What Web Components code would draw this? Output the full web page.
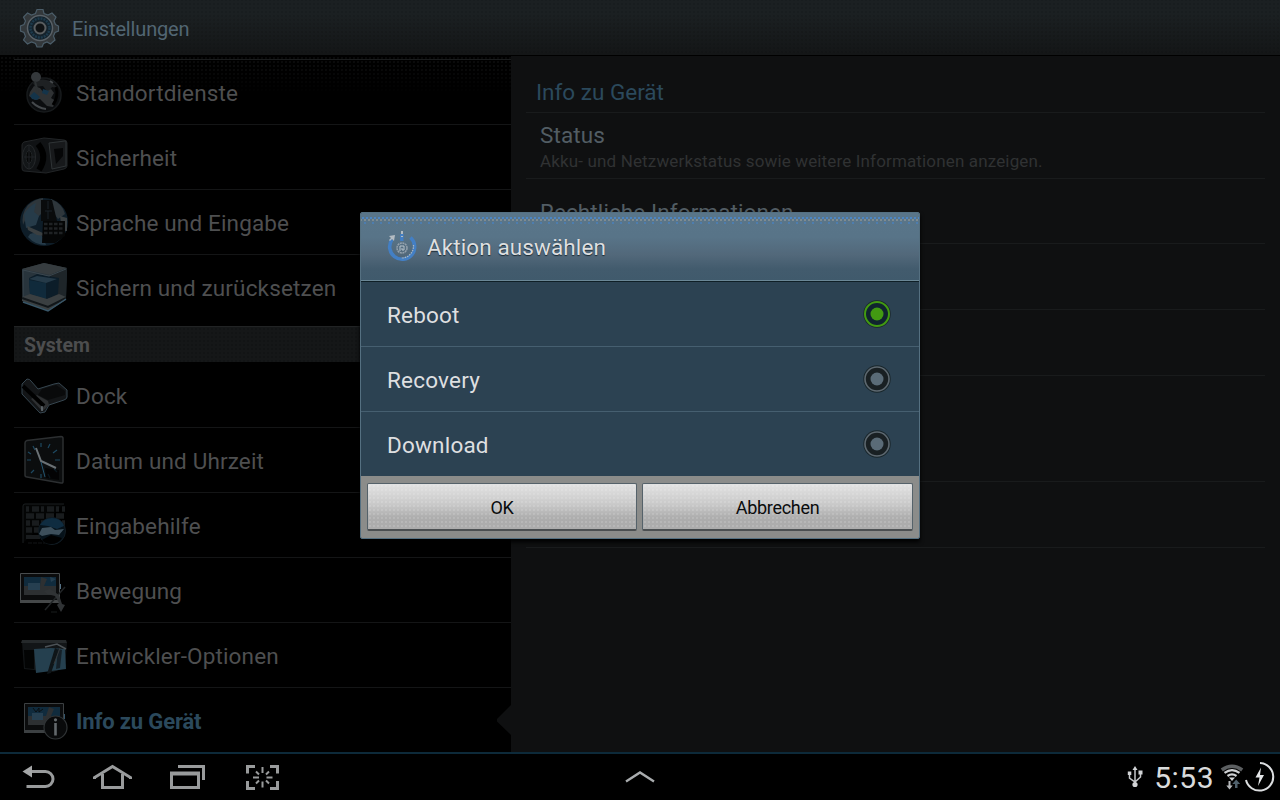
<!DOCTYPE html>
<html lang="de">
<head>
<meta charset="utf-8">
<title>Einstellungen</title>
<style>
  body {
    margin: 0;
    background: #000;
    font-family: Roboto, "Liberation Sans", sans-serif;
  }
</style>
</head>
<body>
<settings-screen></settings-screen>

<script>
const ICONS = {
  gear: [40, 40, `
    <g stroke="#4b5d69" fill="#33383b">
      <path stroke-width="1.2" d="M17 1.500h6l1 4 4 1.500 4-2 4 4-2 4 1.500 3.500 3 1.500v5l-3.500 1.500-1.500 3.500 1.500 4-4.500 4-3.500-2-3.500 1.500-1.500 3.500h-5l-1.500-3.500-4-1.500-4 2-4-4 2-3.500-1.500-4-3.500-1.500v-5l3.500-1.500 1.500-3.500-2-4 4-4 4 2 4-1.500z"/>
    </g>
    <circle cx="20" cy="20" r="12.500" fill="#14222b" stroke="#596167" stroke-width="1.500"/>
    <circle cx="20" cy="20" r="9.500" fill="none" stroke="#1d3a4c" stroke-width="2.500" stroke-dasharray="2 1"/>
    <circle cx="20" cy="20" r="5.500" fill="#101315" stroke="#5a5e60" stroke-width="2"/>`],
  location: [48, 48, `
    <circle cx="24" cy="27" r="17" fill="#0b0d0f" stroke="#171a1c" stroke-width="1.500"/>
    <path fill="#1e2123" d="M13 15q8-6 17-2l8 7-6-1-4 6-5-7-8 1z"/>
    <path fill="#2f3234" d="M10 24l4-6 6 2 4 5 7-4 3 4-3 5 5 3-3 6-6-1-7-7-5 1-6-4z"/>
    <path fill="#14344a" d="M10 28l4-4 6 5-3 3-5-1zM23 21l6 2-2 4-5-2z"/>
    <path d="M12 34q6 6 14 7M30 13l3 2" stroke="#45494c" stroke-width="2" fill="none"/>
    <path d="M36 19q3 9-3 18" stroke="#000" stroke-width="3" fill="none"/>
    <circle cx="16" cy="9" r="5" fill="#34383b"/>
    <path d="M15 13l3 12" stroke="#2e3234" stroke-width="2"/>`],
  safe: [48, 48, `
    <path fill="#101214" stroke="#222527" d="M2 12q0-2 2-3l20-4 20 2q3 0 3 3v23q0 2-3 3l-18 4-22-2q-2 0-2-3z"/>
    <path fill="#17191b" stroke="#2f3436" d="M29 10l16-2q1 0 1 2v23l-14 3z"/>
    <path fill="#050607" d="M34 16l9-1v8l-7 8z"/>
    <ellipse cx="9" cy="24" rx="6.500" ry="12" fill="#131618" stroke="#26292b"/>
    <ellipse cx="9" cy="24" rx="3" ry="6.500" fill="#070808" stroke="#202426"/>
    <path d="M9 13v22M4 24h11" stroke="#202326"/>
    <path d="M18 11q10 12 1 26" stroke="#000" stroke-width="6" fill="none"/>`],
  language: [48, 48, `
    <circle cx="24" cy="24" r="24" fill="#0e1d28"/>
    <path fill="#2e363b" d="M8 7q7-6 15-7l-1 15-8 8-8-3-3 7q-2-11 5-20zM31 1q12 5 14 15l-7 5-6-8z"/>
    <path fill="#263b49" d="M4 16q5-8 12-11l-2 9 5 4-3 9-10 3zM10 36q8-3 13 3l3 8q-11 0-18-8z"/>
    <path fill="#3a3f41" d="M7 28l16 7 1 3-7-1-9-5zM40 18l7 2v13h-5z"/>
    <path fill="#090b0c" d="M21 2h11l5 21h-16z"/>
    <path d="M28 3v8M25 13h7M28 13v8" stroke="#1a2228"/>
    <path fill="#050606" d="M23 23h22v15l-10 7h-13z"/>
    <path d="M24 26h19M24 30.500h19M24 35h19" stroke="#1f2224" stroke-width="2.500" stroke-dasharray="3.500 1.500"/>`],
  backup: [48, 50, `
    <path fill="#28343c" d="M2 7l22-6 23 5-1 30-17 11-26-9z"/>
    <path fill="#363c3f" d="M2 7l22-6 23 5-17 7z"/>
    <path fill="#1e2529" d="M30 13l17-7-1 30-16 10z"/>
    <path fill="#0c1d29" d="M9 16l8-4 22 4-1 16-11 5-17-5z"/>
    <path fill="#102a3b" d="M9 18l17 3v16l-16-5z"/>
    <path fill="#253a48" d="M9 17l8-3 20 3-11 4z"/>
    <path fill="#3a3f41" d="M2 35l8-3 17 5 12-5 7 3v3l-18 11-26-10z"/>
    <path d="M2 36l26 9 18-9" fill="none" stroke="#111619" stroke-width="2"/>
    <path d="M3 40l25 9 18-12" fill="none" stroke="#385668" stroke-width="1.500"/>
    <path d="M3 8l26 6 17-7M3 8v27" stroke="#3a464e" fill="none"/>`],
  dock: [48, 36, `
    <path fill="#131517" stroke="#364650" d="M2 7l5-5q3 0 4 2l7 8 16-5 5-1 8 7v7q0 2-3 3l-15 5-4 7-5 1-18-19z"/>
    <path fill="#090a0b" d="M22 12l14-4 9 6v4l-17 5-10-5z"/>
    <path fill="#2e3032" d="M17 18l11 6 1 4-4 4-3 2-11-12z"/>
    <path d="M3 9l21 20" stroke="#000" stroke-width="4"/>
    <path d="M22 29v5" stroke="#85929b"/>`],
  clock: [42, 50, `
    <path fill="#0b0d0e" stroke="#2c2f31" stroke-width="1.500" d="M2 8q0-2 2-2.500l34-4q2 0 2 2v43q0 2-2 1.500l-34-6q-2 0-2-2z"/>
    <path d="M18 8v4M27 9l-2 4M34 15l-4 3M32 25h5M31 34l3 3M25 39l2 4M18 39v4M11 35l-3 3M4 25h4M5 17l3 2M10 11l2 4" stroke="#1d4860" stroke-width="1.200"/>
    <path d="M13 13l5 13 15 7" stroke="#6a7175" stroke-width="2" fill="none"/>
    <path d="M18 27l4 15" stroke="#245672"/>
    <path fill="#000" d="M22 33l14 2v10l-13-2z" opacity=".7"/>`],
  keyboard: [44, 44, `
    <path d="M1 40V3q0-2 2-2h39" fill="#040505" stroke="#1b1f21"/>
    <g stroke="#191c1e" stroke-width="5.500">
      <path d="M4 6h39" stroke-dasharray="3 3 7 2"/>
      <path d="M4 13h39" stroke-dasharray="8 2"/>
      <path d="M4 20h39" stroke-dasharray="4 2 7 2"/>
      <path d="M4 27h14" stroke-dasharray="6 2"/>
      <path d="M4 34h14" stroke-width="4"/>
    </g>
    <path d="M6 40h24" stroke="#131517" stroke-dasharray="4 1"/>
    <circle cx="30" cy="28" r="13.500" fill="#06121a" stroke="#121c23"/>
    <path fill="#0f2c40" d="M18 22q4-7 12-7 9 0 12 8l-7 3-9-3z"/>
    <path fill="#3d4f5b" d="M17 31l3-6 9-1 4 3 9-1-5 6-8-1-9 2z"/>
    <path fill="#000" d="M20 37l9-5 11 3q-4 6-11 6-6 0-9-4z"/>`],
  motion: [48, 40, `
    <g transform="translate(0 3)">
      <path fill="#0b0c0d" stroke="#484c4e" d="M.500 .500h39v29h-39z"/>
      <path fill="#454849" d="M0 27h40v3h-40z"/>
      <path fill="#102b3d" d="M4 4h32v9h-32z"/>
      <path fill="#2d3032" d="M4 13h32v9h-32zM21 4l6 2-3 7h-4z"/>
      <path fill="#263f50" d="M8 10h12v7h-12zM30 4l6 2-5 3z"/>
      <path d="M40.500 11v5" stroke="#557184"/>
      <path d="M25 37l20-23" stroke="#212426" stroke-width="1.500"/>
      <path fill="#303335" d="M24 18l6-2 9 6 3 9 3 1-4 7-4-7 2-2-4-7-8-2z"/>
      <path d="M31 39h6" stroke="#191c1d"/>
    </g>`],
  developer: [48, 36, `
    <g transform="translate(0 2)">
      <path fill="#121517" d="M2 3h43l2 1-2 25-12 4-29-3z"/>
      <path fill="#25292b" d="M2 1h44l1 3h-46z"/>
      <path fill="#030404" d="M4 11h10v19l-9-1z"/>
      <path fill="#25404f" d="M14 10l17-1 14 1 1 20-30 4z"/>
      <path fill="#0f1518" d="M35 9l4 2-8 23-4 1z"/>
      <path fill="#152028" d="M38 10l4 1-2 18-4 1z"/>
      <path d="M25 8l12-3 9 5" stroke="#4c5256" stroke-width="1.600" fill="none"/>
      <path d="M40 9l-6 16" stroke="#36393b"/>
    </g>`],
  about: [48, 40, `
    <g transform="translate(0 2)">
      <path fill="#0b0c0d" stroke="#3c4042" d="M4.500 1.500h39v29h-39z"/>
      <path fill="#3c4042" d="M4 28h24v3h-24z"/>
      <path fill="#102b3d" d="M8 5h32v9h-32z"/>
      <path fill="#2d3032" d="M8 14h32v9h-32zM29 5l5 2-3 7h-5z"/>
      <path fill="#263f50" d="M12 11h11v7h-11z"/>
      <path d="M13 6l3 4 3-4v4l4-3" stroke="#0b0f11" fill="none"/>
      <path d="M44.500 12v5" stroke="#33546a"/>
      <circle cx="35.500" cy="25.500" r="11.500" fill="#090a0b" stroke="#303436" stroke-width="1.200"/>
      <path d="M35.500 21v12.500" stroke="#64696c" stroke-width="2.600"/>
      <circle cx="35.500" cy="17.800" r="1.600" fill="#64696c"/>
    </g>`],
  power: [30, 32, `
    <g fill="none" stroke="#437fc4">
      <path stroke-width="3.600" d="M5 9.500A12.500 12.500 0 1 0 23.500 7.500"/>
      <path stroke-width="3.400" d="M14.800 4v7"/>
      <path stroke="#aeb8c0" stroke-width="1.200" stroke-dasharray="1.500 1" d="M26.500 15A12 12 0 0 1 14 28"/>
      <circle cx="15" cy="18" r="5" stroke="#93a1ad" stroke-width="1.500" stroke-dasharray="2 .6"/>
      <path d="M13 21v-5h4v4h-2v-2" stroke="#b7c4ce"/>
    </g>
    <path fill="#b4bcc2" d="M2 6l6-1-1 6-2-2-2 2-1-1 2-2zM14 1h2v3h-2zM14 6h2v1h-2z"/>`],
  back: [34, 26, `
    <path fill="none" stroke="#999b9c" stroke-width="3" d="M8 7.500h15.500a7.500 7.500 0 0 1 0 15h-19"/>
    <path fill="#a5a7a8" d="M.500 7.500l9.500-6v12z"/>`],
  home: [40, 26, `
    <g fill="none" stroke="#999b9c" stroke-width="3">
      <path d="M1.500 15v-1.500l18-11 18 11v1.500"/>
      <path d="M9.500 10v13.500h20v-13.500"/>
    </g>`],
  recent: [36, 26, `
    <g fill="none" stroke="#999b9c" stroke-width="3">
      <path d="M1.500 9.500h27v14h-27z" />
      <path d="M8 2.500h25.500v13.500"/>
      <path d="M0 9.500h30" stroke-width="4"/>
    </g>`],
  capture: [34, 26, `
    <g fill="none" stroke="#999b9c">
      <path stroke-width="3" d="M10 2.500h-7.500v7M25 2.500h7.500v7M2.500 17v7.500h7.500M32.500 17v7.500h-7.500"/>
      <path stroke-width="2" d="M17.500 3v6M17.500 17.500v6M8 13.500h6M21.500 13.500h6M11 7.500l3 3M24 7.500l-3 3M11 19.500l3-3M24 19.500l-3-3"/>
    </g>`],
  up: [30, 14, `<path fill="none" stroke="#a9acae" stroke-width="2.400" d="M1 11.500l14-9 14 9"/>`],
  usb: [16, 22, `
    <g fill="none" stroke="#c6c8ca" stroke-width="1.500">
      <path d="M8 3v15M2.500 8v4l5.500 4 5.500-5v-4"/>
    </g>
    <path fill="#d2d4d6" d="M8 0l2.500 4h-5zM.800 5.500h3.500v3.500h-3.500zM11.500 4.500h4v4h-4z"/>
    <circle cx="8" cy="18.500" r="2.600" fill="#d2d4d6"/>`],
  wifi: [24, 26, `
    <g fill="none">
      <path stroke="#5c5f61" stroke-width="3.600" d="M.800 6q10.200-7.500 20.400 0"/>
      <path stroke="#d0d2d4" stroke-width="2.200" d="M3.500 8.800q7.500-5.500 15 0M6.500 12q4.500-3.200 9 0"/>
    </g>
    <path fill="#d2d4d6" d="M8 13.500h6l-3 3.500z"/>
    <path fill="#b5b8ba" d="M7.500 17h2v4.500h2.200l-3.200 4-3.200-4h2.200z"/>
    <path fill="#50616c" d="M14 24h2.500v-4h2.700l-4-4.500-3.900 4.500h2.700z"/>`],
  battery: [30, 32, `
    <path fill="none" stroke="#dcdee0" stroke-width="2" d="M15 2A13.800 13.800 0 1 1 1 19"/>
    <path fill="#e4e6e8" d="M16 6.500l-5.500 10h4l-1.500 8.500 6-11h-4z"/>`]
};

class UiIcon extends HTMLElement {
  connectedCallback() {
    const [w, h, shapes] = ICONS[this.getAttribute('name')];
    this.attachShadow({ mode: 'open' }).innerHTML = `
    <style>
      :host { display: block; flex: none; }
      svg { display: block; overflow: visible; }
    </style>
    <svg width="${w}" height="${h}" viewBox="0 0 ${w} ${h}">${shapes}</svg>`;
  }
}

class SettingsHeader extends HTMLElement {
  connectedCallback() {
    this.attachShadow({ mode: 'open' }).innerHTML = `
    <style>
      :host {
        display: flex;
        align-items: center;
        gap: 12px;
        box-sizing: border-box;
        height: 56px;
        padding: 0 20px;
        font-size: 20px;
        letter-spacing: -.15px;
        color: #526673;
        border-bottom: 1px solid #000;
        background:
          radial-gradient(circle, rgba(0,0,0,.2) .6px, transparent .8px) 0 14px / 4px 4px,
          linear-gradient(#1b2022 0, #1b2022 14px, #141617 54px);
      }
      span { padding-top: 2px; }
    </style>
    <ui-icon name="gear"></ui-icon><span><slot></slot></span>`;
  }
}

class NavItem extends HTMLElement {
  connectedCallback() {
    this.attachShadow({ mode: 'open' }).innerHTML = `
    <style>
      :host {
        display: flex;
        align-items: center;
        box-sizing: border-box;
        height: 65px;
        margin-left: 14px;
        border-bottom: 1px solid #141516;
        font-size: 22.5px;
        letter-spacing: .15px;
        color: #4e4f50;
      }
      :host([last]) { border-bottom-color: transparent; }
      :host([active]) {
        font-size: 22px;
        font-weight: 700;
        letter-spacing: -.15px;
        color: #2b495c;
      }
      .icon {
        display: flex;
        justify-content: center;
        width: 48px;
        margin: 0 8px 0 6px;
      }
      .label { padding-top: 2px; }
    </style>
    <div class="icon"><ui-icon name="${this.getAttribute('icon')}"></ui-icon></div>
    <span class="label"><slot></slot></span>`;
  }
}

class NavHeading extends HTMLElement {
  connectedCallback() {
    this.attachShadow({ mode: 'open' }).innerHTML = `
    <style>
      :host {
        display: flex;
        align-items: center;
        box-sizing: border-box;
        height: 36px;
        margin: 6px 0 1px 14px;
        padding: 1px 0 0 10px;
        border-top: 1px solid #212324;
        font-size: 19.5px;
        font-weight: 700;
        color: #4c4d4e;
        background:
          radial-gradient(circle, rgba(0,0,0,.3) .6px, transparent .8px) 0 0 / 4px 4px,
          #151718;
      }
    </style>
    <slot></slot>`;
  }
}

class PrefItem extends HTMLElement {
  connectedCallback() {
    this.attachShadow({ mode: 'open' }).innerHTML = `
    <style>
      :host {
        display: flex;
        flex-direction: column;
        box-sizing: border-box;
        height: var(--row, 66px);
        padding: 9px 14px 0;
        border-bottom: 1px solid #191b1c;
        font-size: 22.5px;
        line-height: 26px;
        letter-spacing: .1px;
        color: #525d64;
      }
      ::slotted(small) {
        display: block;
        margin-top: 1px;
        font-size: 17px;
        line-height: 24px;
        letter-spacing: .15px;
        color: #303233;
      }
    </style>
    <slot></slot><slot name="summary"></slot>`;
  }
}

class PrefPane extends HTMLElement {
  connectedCallback() {
    this.attachShadow({ mode: 'open' }).innerHTML = `
    <style>
      :host {
        display: block;
        position: relative;
        flex: 1;
        padding: 0 15px;
        background: #0f1011;
      }
      /* notch that points at the selected entry */
      :host::before {
        content: "";
        position: absolute;
        left: -14px;
        top: 649px;
        width: 14px;
        height: 30px;
        background: #0f1011;
        clip-path: polygon(100% 0, 0 47%, 0 55%, 100% 100%);
      }
      h2 {
        box-sizing: border-box;
        height: 57px;
        margin: 0;
        padding: 23px 10px 0;
        border-bottom: 1px solid #191b1c;
        font-size: 22.5px;
        font-weight: 400;
        line-height: 26px;
        letter-spacing: 0;
        color: #2b495c;
      }
    </style>
    <h2>${this.getAttribute('heading')}</h2>
    <slot></slot>`;
  }
}

class NavBar extends HTMLElement {
  connectedCallback() {
    this.attachShadow({ mode: 'open' }).innerHTML = `
    <style>
      :host {
        display: grid;
        grid-template-columns: 1fr auto 1fr;
        align-items: center;
        box-sizing: border-box;
        height: 48px;
        border-top: 2px solid #0d2a3a;
        background: #000;
      }
      .keys, .status { display: flex; align-items: center; }
      .keys { gap: 37px; padding-left: 22px; }
      .keys ui-icon:last-child { margin-left: 2px; }
      .status { justify-content: flex-end; padding-right: 5px; }
      .time {
        margin: 0 7px 0 11px;
        padding-top: 2px;
        font-size: 30px;
        line-height: 34px;
        letter-spacing: .5px;
        color: #d9dbdc;
      }
    </style>
    <div class="keys">
      <ui-icon name="back"></ui-icon>
      <ui-icon name="home"></ui-icon>
      <ui-icon name="recent"></ui-icon>
      <ui-icon name="capture"></ui-icon>
    </div>
    <ui-icon name="up"></ui-icon>
    <div class="status">
      <ui-icon name="usb"></ui-icon>
      <span class="time">5:53</span>
      <ui-icon name="wifi"></ui-icon>
      <ui-icon name="battery"></ui-icon>
    </div>`;
  }
}

class RadioRow extends HTMLElement {
  connectedCallback() {
    const on = this.hasAttribute('checked');
    const ring = on ? '#429a12' : '#5d6870';
    const dot = on ? '#429a12' : '#5a6b77';
    const base = on ? '#10242f' : '#192023';
    this.attachShadow({ mode: 'open' }).innerHTML = `
    <style>
      :host {
        display: flex;
        align-items: center;
        justify-content: space-between;
        box-sizing: border-box;
        height: 65px;
        padding: 0 28px 0 26px;
        border-bottom: 1px solid #465f70;
        font-size: 22.5px;
        letter-spacing: .2px;
        color: #dedfe0;
        cursor: pointer;
      }
      :host(:last-of-type) { border-bottom: 0; height: 64px; }
      span { padding-top: 2px; }
    </style>
    <span><slot></slot></span>
    <svg width="28" height="28" viewBox="0 0 28 28">
      <circle cx="14" cy="14" r="13.700" fill="#19262b"/>
      <circle cx="14" cy="14" r="12" fill="${base}" stroke="${ring}" stroke-width="${on ? 2 : 1.6}"/>
      <circle cx="14" cy="14" r="6.500" fill="${dot}"/>
    </svg>`;
  }
}

class DialogButton extends HTMLElement {
  connectedCallback() {
    this.attachShadow({ mode: 'open' }).innerHTML = `
    <style>
      :host { display: flex; }
      button {
        flex: 1;
        height: 48px;
        padding: 2px 0 0;
        border: 1px solid #55626a;
        border-bottom: 2px solid #4b4f51;
        border-radius: 2px;
        font: 18px Roboto, "Liberation Sans", sans-serif;
        letter-spacing: -.3px;
        color: #0a0c0d;
        background:
          radial-gradient(circle, rgba(255,255,255,.2) .6px, transparent .9px) 0 0 / 4px 4px,
          linear-gradient(#e2e2e2, #c9c9c9 45%, #adadad 75%, #acacac);
      }
    </style>
    <button><slot></slot></button>`;
  }
}

class ActionDialog extends HTMLElement {
  connectedCallback() {
    this.attachShadow({ mode: 'open' }).innerHTML = `
    <style>
      :host {
        position: absolute;
        left: 360px;
        top: 212px;
        display: block;
        box-sizing: border-box;
        width: 560px;
        height: 327px;
        border: 1px solid #557081;
        border-radius: 2px;
        overflow: hidden;
        background: #2c4252;
        box-shadow: 0 3px 4px #000;
      }
      header {
        display: flex;
        align-items: center;
        gap: 10px;
        box-sizing: border-box;
        height: 69px;
        padding: 0 26px 2px;
        border-bottom: 1px solid #0f1f26;
        box-shadow: inset 0 -1px #6b8796;
        font-size: 22.5px;
        letter-spacing: .1px;
        color: #dedfe0;
        text-shadow: 0 1px 1px #1b2a33;
        background:
          radial-gradient(circle, #4d86c4 .7px, transparent 1px) 0 3px / 4px 4px repeat-x,
          radial-gradient(circle, #7f8c93 .7px, transparent 1px) 2px 5px / 4px 4px repeat-x,
          radial-gradient(circle, #4d7db0 .7px, transparent 1px) 0 8px / 8px 4px repeat-x,
          linear-gradient(#597589 0, #587488 24px, #52687a 42px, #425b6d 56px, #405a6c);
      }
      header span { padding-top: 2px; }
      footer {
        display: grid;
        grid-template-columns: 270px 1fr;
        gap: 5px;
        align-items: start;
        height: 55px;
        padding: 7px 6px 0;
        background: #8b8c8a;
      }
    </style>
    <header><ui-icon name="power"></ui-icon><span>${this.getAttribute('heading')}</span></header>
    <slot></slot>
    <footer><slot name="button"></slot></footer>`;
  }
}

class SettingsScreen extends HTMLElement {
  connectedCallback() {
    this.attachShadow({ mode: 'open' }).innerHTML = `
    <style>
      :host {
        display: flex;
        flex-direction: column;
        position: relative;
        width: 1280px;
        height: 800px;
        overflow: hidden;
        background: #000;
      }
      main { display: flex; flex: 1; min-height: 0; }
      nav {
        box-sizing: border-box;
        width: 511px;
        padding-top: 3px;
        background:
          linear-gradient(transparent 10px, #000 38px),
          radial-gradient(circle, #151617 .6px, #000 .8px) 0 0 / 4px 4px;
      }
      nav::before {
        content: "";
        display: block;
        height: 1px;
        margin-left: 14px;
        background: #1a1c1d;
      }
    </style>
    <settings-header>Einstellungen</settings-header>
    <main>
      <nav>
        <nav-item icon="location">Standortdienste</nav-item>
        <nav-item icon="safe">Sicherheit</nav-item>
        <nav-item icon="language">Sprache und Eingabe</nav-item>
        <nav-item icon="backup" last>Sichern und zurücksetzen</nav-item>
        <nav-heading>System</nav-heading>
        <nav-item icon="dock">Dock</nav-item>
        <nav-item icon="clock">Datum und Uhrzeit</nav-item>
        <nav-item icon="keyboard">Eingabehilfe</nav-item>
        <nav-item icon="motion">Bewegung</nav-item>
        <nav-item icon="developer">Entwickler-Optionen</nav-item>
        <nav-item icon="about" active last>Info zu Gerät</nav-item>
      </nav>
      <pref-pane heading="Info zu Gerät">
        <pref-item>Status<small slot="summary">Akku- und Netzwerkstatus sowie weitere Informationen anzeigen.</small></pref-item>
        <pref-item style="--row: 65px; padding-top: 20px">Rechtliche Informationen</pref-item>
        <pref-item></pref-item>
        <pref-item></pref-item>
        <pref-item style="--row: 106px"></pref-item>
        <pref-item></pref-item>
      </pref-pane>
    </main>
    <nav-bar></nav-bar>
    <action-dialog heading="Aktion auswählen">
      <radio-row checked>Reboot</radio-row>
      <radio-row>Recovery</radio-row>
      <radio-row>Download</radio-row>
      <dialog-button slot="button">OK</dialog-button>
      <dialog-button slot="button">Abbrechen</dialog-button>
    </action-dialog>`;
  }
}

customElements.define('ui-icon', UiIcon);
customElements.define('settings-header', SettingsHeader);
customElements.define('nav-item', NavItem);
customElements.define('nav-heading', NavHeading);
customElements.define('pref-item', PrefItem);
customElements.define('pref-pane', PrefPane);
customElements.define('nav-bar', NavBar);
customElements.define('radio-row', RadioRow);
customElements.define('dialog-button', DialogButton);
customElements.define('action-dialog', ActionDialog);
customElements.define('settings-screen', SettingsScreen);
</script>
</body>
</html>
